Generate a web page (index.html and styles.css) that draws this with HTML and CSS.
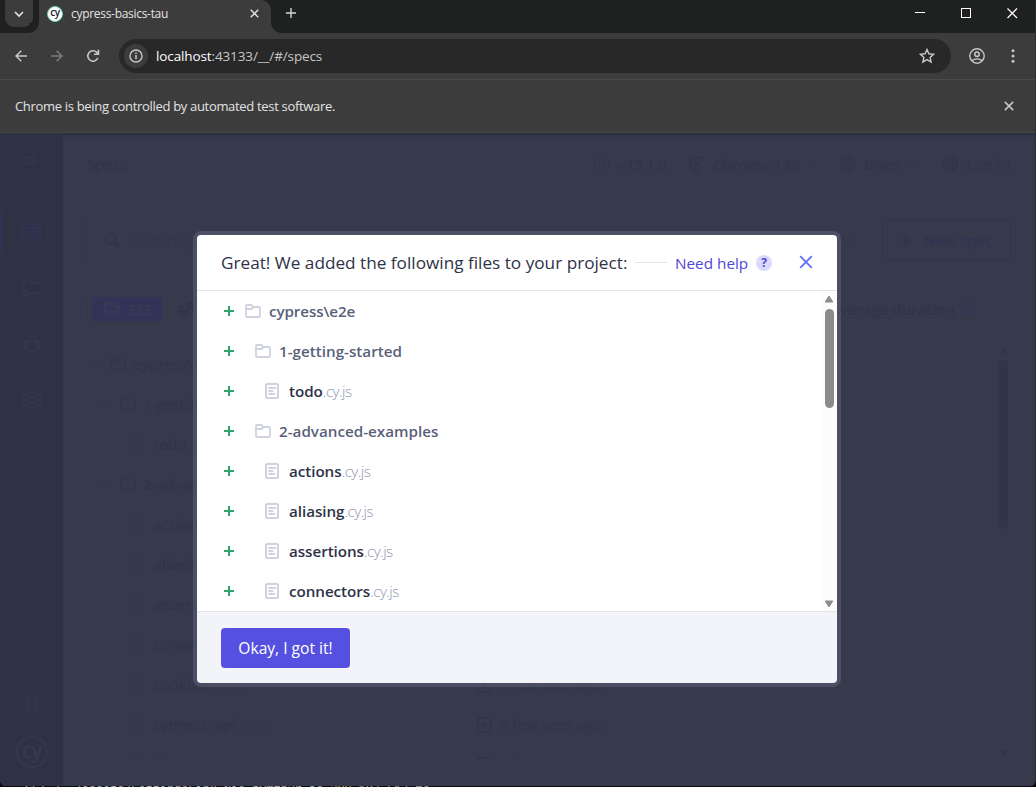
FILE: index.html
```html
<!DOCTYPE html>
<html lang="en">
<head>
<meta charset="utf-8">
<title>cypress-basics-tau</title>
<link rel="stylesheet" href="styles.css">
</head>
<body>
<svg class="defs" width="0" height="0">
  <symbol id="folder" viewBox="0 0 16 16"><path d="M1 3a1 1 0 0 1 1-1h4.2a1 1 0 0 1 .9.6L7.700 4H14a1 1 0 0 1 1 1v8a1 1 0 0 1-1 1H2a1 1 0 0 1-1-1z M1.500 6h5.200L8.500 4.200" fill="none" stroke="currentColor" stroke-width="1.800" stroke-linejoin="round"/></symbol>
  <symbol id="doc" viewBox="0 0 16 16"><rect x="2" y="1" width="12" height="14" rx=".8" class="doc-fill" stroke="currentColor" stroke-width="2"/><path d="M5 5h6.500M5 8h3.500M5 11h5.500" stroke="currentColor" stroke-width="1.800" stroke-linecap="round"/></symbol>
  <symbol id="plus" viewBox="0 0 12 12"><path d="M6 1v10M1 6h10" stroke="currentColor" stroke-width="2"/></symbol>
  <symbol id="chev" viewBox="0 0 10 10"><path d="M1 3l4 4 4-4" fill="none" stroke="currentColor" stroke-width="1.600"/></symbol>
  <symbol id="cross" viewBox="0 0 12 12"><path d="M1 1l10 10M11 1L1 11" stroke="currentColor" stroke-width="1.900"/></symbol>
  <symbol id="added" viewBox="0 0 16 16"><rect x="2" y="1" width="12.500" height="14" rx="1.500" fill="none" stroke="currentColor" stroke-width="2"/><path d="M8 5v6M5 8h6" stroke="currentColor" stroke-width="1.500"/></symbol>
</svg>
<div class="window">
  <div class="tabstrip">
    <span class="tabsearch"><svg width="10" height="10"><use href="#chev"/></svg></span>
    <div class="tab">
      <span class="favicon">cy</span>
      <span class="tab-title">cypress-basics-tau</span>
      <svg class="tab-x" width="9" height="9"><use href="#cross"/></svg>
    </div>
    <svg class="newtab" width="10" height="10" viewBox="0 0 10 10"><path d="M5 0v10M0 5h10" stroke="currentColor" stroke-width="1.400"/></svg>
    <div class="controls">
      <svg width="10" height="10"><path d="M0 4.500h10" stroke="#fff"/></svg>
      <svg width="10" height="10"><rect x=".5" y=".5" width="9" height="9" fill="none" stroke="#fff"/></svg>
      <svg width="11" height="11"><path d="M.5.5l9.500 9.500M10 .5L.5 10" stroke="#fff" stroke-width="1.200"/></svg>
    </div>
  </div>
  <div class="toolbar">
    <svg class="back" width="12" height="12" viewBox="0 0 12 12"><path d="M12 6H1M6.300.7L1 6l5.300 5.300" fill="none" stroke="currentColor" stroke-width="1.500"/></svg>
    <svg class="fwd" width="12" height="12" viewBox="0 0 12 12"><path d="M0 6h11M5.700.7L11 6l-5.300 5.300" fill="none" stroke="currentColor" stroke-width="1.500"/></svg>
    <svg class="reload" width="14" height="14" viewBox="0 0 14 14"><path d="M11.800 9A5.200 5.200 0 1 1 10.800 3.400L12.300 5M12.500.8V5.200H8" fill="none" stroke="currentColor" stroke-width="1.600"/></svg>
    <div class="omnibox">
      <span class="info"><svg width="14" height="14" viewBox="0 0 14 14"><circle cx="7" cy="7" r="6" fill="none" stroke="currentColor" stroke-width="1.400"/><path d="M7 6v4.300M7 3.500v1.500" stroke="currentColor" stroke-width="1.500"/></svg></span>
      <span class="url"><b>localhost</b>:43133/__/#/specs</span>
      <svg class="star" width="16" height="16" viewBox="0 0 16 16"><path d="M8 1.500l1.900 4.300 4.700.5-3.500 3.100 1 4.600L8 11.600 3.900 14l1-4.600L1.400 6.300l4.700-.5z" fill="none" stroke="currentColor" stroke-width="1.400"/></svg>
    </div>
    <svg class="profile" width="16" height="16" viewBox="0 0 16 16"><circle cx="8" cy="8" r="7.200" fill="none" stroke="currentColor" stroke-width="1.400"/><circle cx="8" cy="6.200" r="2.200" fill="none" stroke="currentColor" stroke-width="1.500"/><path d="M3 12.800c2.500-2.600 7.500-2.600 10 0" fill="none" stroke="currentColor" stroke-width="1.400"/></svg>
    <svg class="menu" width="4" height="14" viewBox="0 0 4 14"><circle cx="2" cy="1.700" r="1.500" fill="currentColor"/><circle cx="2" cy="7" r="1.500" fill="currentColor"/><circle cx="2" cy="12.300" r="1.500" fill="currentColor"/></svg>
  </div>
  <div class="infobar"><span>Chrome is being controlled by automated test software.</span><svg width="10" height="10"><use href="#cross"/></svg></div>

  <div class="app">
    <nav class="side">
      <svg class="s-proj" width="22" height="20" viewBox="0 0 22 20"><rect x="4" y="4" width="16" height="14" rx="2" fill="#2e3145"/><rect x="0" y="1" width="16" height="14" rx="2" fill="#2e3449"/><path d="M2 3.500h8" stroke="#2b2f42" stroke-width="1.500" stroke-dasharray="2 1"/></svg>
      <div class="s-active"><svg width="20" height="20" viewBox="0 0 20 20"><path d="M1 2.500h18v15.500H1zM1 6h18M8 9l-3 3 3 3M12 9l3 3-3 3" fill="none" stroke="currentColor" stroke-width="2"/></svg></div>
      <svg class="s-icon" width="20" height="20" viewBox="0 0 20 20"><path d="M0 2l5 5M5 2L0 7M8 5h12M8 15h12M1 13h4v4H1z" fill="none" stroke="currentColor" stroke-width="1.800"/></svg>
      <svg class="s-icon" width="20" height="20" viewBox="0 0 20 20"><path d="M5 8h10v5a5 5 0 0 1-10 0zM6.500 8V5.500a3.500 3.500 0 0 1 7 0V8M1 5c0 3 2 4 4 4M19 5c0 3-2 4-4 4M1 19c0-3 1-4 4-5M19 19c0-3-1-4-4-5M1 12h4M15 12h4" fill="none" stroke="currentColor" stroke-width="1.800"/></svg>
      <svg class="s-icon" width="20" height="20" viewBox="0 0 20 20"><path d="M8 1h4l.8 2.800L15 5l2.800-.7 1.500 3.400L17.500 10l1.800 2.300-1.500 3.400L15 15l-2.200 1.200L12 19H8l-.8-2.800L5 15l-2.800.7-1.500-3.400L2.500 10 .7 7.700l1.500-3.400L5 5l2.200-1.200z" fill="none" stroke="currentColor" stroke-width="1.600"/><circle cx="10" cy="10" r="3" fill="none" stroke="currentColor" stroke-width="1.800"/></svg>
      <svg class="s-cmd" width="16" height="16" viewBox="0 0 16 16"><path d="M5 5h6v6H5zM5 5H3a2 2 0 1 1 2-2zM11 5V3a2 2 0 1 1 2 2zM11 11h2a2 2 0 1 1-2 2zM5 11v2a2 2 0 1 1-2-2z" fill="none" stroke="currentColor" stroke-width="1.600"/></svg>
      <span class="s-logo">cy</span>
    </nav>
    <main class="main">
      <header class="head">
        <span class="h-title">Specs</span>
        <div class="h-links">
          <span class="h-item ver"><span class="mini-cy">cy</span>v15.1.0</span>
          <span class="h-item chr"><svg width="16" height="16" viewBox="0 0 16 16"><path d="M14 4A7 7 0 1 0 9 14.500" fill="none" stroke="currentColor" stroke-width="3"/><circle cx="8" cy="8" r="3" fill="currentColor"/></svg>Chrome 139<svg class="caret" width="8" height="8"><use href="#chev"/></svg></span>
          <span class="h-item docs"><svg width="16" height="16" viewBox="0 0 16 16"><path d="M8 1a7 7 0 1 0 0 14A7 7 0 1 0 8 1M3 4l5 2-1 4-4-2M9 13l1-4 4-1M8 1l4 5" fill="none" stroke="currentColor" stroke-width="1.800"/></svg>Docs<svg class="caret" width="8" height="8"><use href="#chev"/></svg></span>
          <span class="h-item login"><svg width="16" height="16" viewBox="0 0 16 16"><circle cx="8" cy="8" r="7" fill="none" stroke="currentColor" stroke-width="1.800"/><circle cx="8" cy="6" r="2.500" fill="none" stroke="currentColor" stroke-width="1.500"/><path d="M3 13c2-3 8-3 10 0" fill="none" stroke="currentColor" stroke-width="1.800"/></svg>Log in</span>
        </div>
      </header>
      <div class="searchrow">
        <div class="search"><svg width="15" height="15" viewBox="0 0 15 15"><circle cx="6" cy="6" r="5" fill="none" stroke="currentColor" stroke-width="1.800"/><path d="M9.500 9.500L14 14" stroke="currentColor" stroke-width="1.800"/></svg><span class="ph">Search specs</span><span class="match">20 matches</span></div>
        <div class="newspec"><svg width="13" height="13"><use href="#plus"/></svg>New spec</div>
      </div>
      <div class="cols">
        <div class="switch"><span class="e2e"><svg width="16" height="16" viewBox="0 0 16 16"><path d="M1 2h11v9H1zM12 5h3v9H4v-3M3 4.500h7" fill="none" stroke="currentColor" stroke-width="1.600"/></svg>E2E</span><svg class="comp" width="16" height="16" viewBox="0 0 16 16"><path d="M1 6h4v4H1zM1 10h4v4H1zM5 10h4v4H5zM9 2h5v5H9z" fill="none" stroke="currentColor" stroke-width="2"/></svg></div>
        <div class="avg"><span>Average duration</span><i>?</i></div>
      </div>
      <div class="listwrap">
        <div class="list">
          <div class="brow dir"><svg width="10" height="10"><use href="#chev"/></svg><svg width="16" height="16"><use href="#folder"/></svg><b>cypress\e2e</b></div>
          <div class="brow dir sub"><svg width="10" height="10"><use href="#chev"/></svg><svg width="16" height="16"><use href="#folder"/></svg><b>1-getting-started</b></div>
          <div class="brow file"><svg width="16" height="16"><use href="#doc"/></svg><b>todo</b><em>.cy.js</em></div>
          <div class="brow dir sub"><svg width="10" height="10"><use href="#chev"/></svg><svg width="16" height="16"><use href="#folder"/></svg><b>2-advanced-examples</b></div>
          <div class="brow file"><svg width="16" height="16"><use href="#doc"/></svg><b>actions</b><em>.cy.js</em></div>
          <div class="brow file"><svg width="16" height="16"><use href="#doc"/></svg><b>aliasing</b><em>.cy.js</em></div>
          <div class="brow file"><svg width="16" height="16"><use href="#doc"/></svg><b>assertions</b><em>.cy.js</em></div>
          <div class="brow file"><svg width="16" height="16"><use href="#doc"/></svg><b>connectors</b></div>
          <div class="brow file"><svg width="16" height="16"><use href="#doc"/></svg><b>cookies</b><em>.cy.js</em><span class="ago"><svg width="16" height="16"><use href="#added"/></svg>a few secs ago</span></div>
          <div class="brow file"><svg width="16" height="16"><use href="#doc"/></svg><b>cypress_api</b><em>.cy.js</em><span class="ago"><svg width="16" height="16"><use href="#added"/></svg>a few secs ago</span></div>
          <div class="brow file"><svg width="16" height="16"><use href="#doc"/></svg><b>files</b><em>.cy.js</em><span class="ago"><svg width="16" height="16"><use href="#added"/></svg>a few secs ago</span></div>
        </div>
        <div class="bscroll"><svg width="10" height="8"><path d="M1 8L5 1l4 7z" fill="currentColor"/></svg><div class="bthumb"></div><svg class="bdown" width="10" height="8"><path d="M1 0l4 7 4-7z" fill="currentColor"/></svg></div>
      </div>
    </main>

    <section class="modal">
      <div class="m-head">
        <h2>Great! We added the following files to your project:</h2>
        <span class="dash"></span>
        <span class="help">Need help</span><span class="q">?</span>
        <svg class="m-x" width="14" height="14" viewBox="0 0 14 14"><path d="M1.200 1.200l11.600 11.600M12.800 1.200L1.200 12.800" stroke="currentColor" stroke-width="1.900"/></svg>
      </div>
      <div class="m-body">
        <div class="files">
          <div class="row l0"><svg class="pl" width="12" height="12"><use href="#plus"/></svg><svg class="ic" width="18" height="16"><use href="#folder"/></svg><b>cypress\e2e</b></div>
          <div class="row l1"><svg class="pl" width="12" height="12"><use href="#plus"/></svg><svg class="ic" width="18" height="16"><use href="#folder"/></svg><b>1-getting-started</b></div>
          <div class="row l2"><svg class="pl" width="12" height="12"><use href="#plus"/></svg><svg class="ic" width="16" height="16"><use href="#doc"/></svg><b>todo</b><em>.cy.js</em></div>
          <div class="row l1"><svg class="pl" width="12" height="12"><use href="#plus"/></svg><svg class="ic" width="18" height="16"><use href="#folder"/></svg><b>2-advanced-examples</b></div>
          <div class="row l2"><svg class="pl" width="12" height="12"><use href="#plus"/></svg><svg class="ic" width="16" height="16"><use href="#doc"/></svg><b>actions</b><em>.cy.js</em></div>
          <div class="row l2"><svg class="pl" width="12" height="12"><use href="#plus"/></svg><svg class="ic" width="16" height="16"><use href="#doc"/></svg><b>aliasing</b><em>.cy.js</em></div>
          <div class="row l2"><svg class="pl" width="12" height="12"><use href="#plus"/></svg><svg class="ic" width="16" height="16"><use href="#doc"/></svg><b>assertions</b><em>.cy.js</em></div>
          <div class="row l2"><svg class="pl" width="12" height="12"><use href="#plus"/></svg><svg class="ic" width="16" height="16"><use href="#doc"/></svg><b>connectors</b><em>.cy.js</em></div>
        </div>
        <div class="scroll"><svg width="10" height="8"><path d="M1.200 7L5 1l3.800 6z" fill="#8b8b8b" stroke="#8b8b8b" stroke-linejoin="round"/></svg><div class="thumb"></div><svg class="down" width="10" height="8"><path d="M1.200 1L5 7l3.800-6z" fill="#8b8b8b" stroke="#8b8b8b" stroke-linejoin="round"/></svg></div>
      </div>
      <div class="m-foot"><button class="ok">Okay, I got it!</button></div>
    </section>
  </div>
</div>
<div class="terminal"><span>GET /__/assets/SettingsLink-Nio_bvmfp3r.js <i>200</i> 187.517 ms</span></div>
</body>
</html>
```
FILE: styles.css
```css
* { box-sizing: border-box; }
body { margin: 0; width: 1036px; height: 787px; overflow: hidden; background: #0c0c0c; font-family: "Open Sans", "Noto Sans", sans-serif; }
svg { flex: none; display: block; }
.defs { position: absolute; }
b { font-weight: 600; }
em, i { font-style: normal; }

.window { height: 786px; border-right: 1px solid #2d2f2f; border-radius: 0 0 6px 6px; overflow: hidden; background: #3c3c3c; }

/* Browser chrome */
.tabstrip { display: flex; height: 33px; background: #1f2120; }
.tabsearch { width: 28px; height: 27px; margin-left: 5px; background: #3c3c3c; border-radius: 0 0 9px 9px; display: flex; align-items: center; justify-content: center; color: #e3e3e3; }
.tab { width: 232px; height: 33px; margin-left: 6px; padding: 0 12px 6px 8px; background: #3c3c3c; border-radius: 0 10px 0 0; display: flex; align-items: center; color: #e3e3e3; position: relative; }
.tab::before, .tab::after { content: ""; position: absolute; bottom: 0; width: 10px; height: 10px; }
.tab::before { left: -10px; background: radial-gradient(circle at 0 0, #1f2120 9.500px, #3c3c3c 10px); }
.tab::after { right: -10px; background: radial-gradient(circle at 100% 0, #1f2120 9.500px, #3c3c3c 10px); }
.favicon { width: 16px; height: 16px; border-radius: 50%; background: #fff; border: 1px solid #69d3a7; color: #1b1e2e; font-size: 10px; line-height: 11px; text-align: center; font-weight: 600; letter-spacing: -.5px; }
.tab-title { font-size: 12px; line-height: 16px; margin-left: 8px; letter-spacing: -.3px; white-space: nowrap; }
.tab-x { margin-left: auto; }
.newtab { margin: 8px 0 0 15px; color: #d5d5d5; }
.controls { margin-left: auto; display: flex; gap: 36px; padding: 8px 17px 0 0; }
.toolbar { height: 46px; display: flex; align-items: center; color: #c7c7c7; }
.back { margin-left: 15px; }
.fwd { margin-left: 24px; color: #7b7b7b; }
.reload { margin-left: 23px; }
.omnibox { width: 832px; height: 34px; margin-left: 19px; border-radius: 17px; background: #282828; display: flex; align-items: center; padding: 0 16px 0 5px; }
.info { width: 24px; height: 24px; border-radius: 50%; background: #3c3c3c; display: flex; align-items: center; justify-content: center; }
.url { margin-left: 8px; font-size: 13.500px; color: #c7c7c7; letter-spacing: -.12px; }
.url b { color: #fff; font-weight: 400; }
.star { margin-left: auto; }
.profile { margin-left: 18px; }
.menu { margin-left: 26px; }
.infobar { height: 54px; border-top: 1px solid #494949; border-bottom: 1px solid #464646; display: flex; align-items: center; justify-content: space-between; padding: 0 21px 0 15px; font-size: 13px; letter-spacing: -.32px; color: #e3e3e3; }
.infobar svg { color: #c7c7c7; }

/* Dimmed app */
.app { height: 653px; display: flex; position: relative; background: #37394c; font-size: 15px; box-shadow: inset 0 3px 4px -2px #25283a; }
.side { width: 63px; background: #2f3245; display: flex; flex-direction: column; align-items: center; color: #343749; padding: 18px 0 18px; border-radius: 0 0 0 6px; }
.s-proj { margin-left: 1px; }
.s-active { width: 63px; height: 40px; margin-top: 41px; border-left: 3px solid #32345a; display: flex; align-items: center; padding-left: 18px; color: #32355a; opacity: .6; }
.s-icon { margin-top: 36px; }
.s-active + .s-icon { margin-top: 26px; }
.s-cmd { margin: auto 2px 0 0; }
.s-logo { width: 32px; height: 32px; margin-top: 24px; border: 2px solid #353849; border-radius: 50%; color: #37394b; font-size: 21px; line-height: 24px; font-weight: 600; text-align: center; letter-spacing: -1px; }
.main { flex: 1; padding: 0 24px; color: #323549; }
.head { height: 61px; display: flex; align-items: center; justify-content: space-between; }
.h-title { font-size: 15.200px; }
.h-links { display: flex; }
.h-item { display: flex; align-items: center; gap: 8px; font-weight: 600; white-space: nowrap; color: #33364a; }
.ver { width: 95px; letter-spacing: -.35px; }
.chr { width: 151px; letter-spacing: -.1px; }
.docs { width: 102px; }
.login { width: 69px; letter-spacing: .2px; }
.caret { color: #35384b; }
.mini-cy { width: 16px; height: 16px; border: 1.500px solid; border-radius: 50%; font-size: 9px; line-height: 11px; text-align: center; }
.searchrow { display: flex; justify-content: space-between; margin-top: 26px; height: 40px; }
.search { width: 779px; display: flex; align-items: center; padding-left: 17px; border-left: 1px solid #35374a; }
.ph { margin-left: 9px; color: #34364a; }
.match { margin-left: auto; padding-right: 16px; color: #34364a; }
.newspec { width: 129px; border: 1px solid #323448; border-radius: 4px; display: flex; align-items: center; justify-content: center; gap: 10px; font-weight: 600; color: #323451; }
.newspec svg { color: #323548; }
.cols { display: flex; height: 28px; margin-top: 35px; justify-content: space-between; align-items: center; }
.switch { display: flex; align-items: center; border-left: 1px solid #34364a; padding-left: 4px; }
.e2e { width: 70px; height: 24px; border-radius: 4px; background: #32345a; opacity: .8; color: #3b3c57; display: flex; align-items: center; gap: 8px; padding-left: 12px; font-size: 14px; }
.comp { margin-left: 17px; color: #323548; }
.avg { display: flex; gap: 5px; align-items: center; font-weight: 600; padding-right: 35px; }
.avg span { border-bottom: 1px dotted; line-height: 18px; }
.avg i { width: 16px; height: 16px; border-radius: 50%; background: #34365a66; text-align: center; font-size: 11px; line-height: 16px; }
.listwrap { display: flex; height: 416px; margin-top: 21px; overflow: hidden; }
.list { flex: 1; }
.brow { height: 40px; display: flex; align-items: center; position: relative; color: #32354e; }
.dir { padding-left: 3px; color: #33364a; }
.dir svg { color: #34374a; }
.dir svg + svg { margin-left: 10px; }
.dir b { margin-left: 7px; }
.sub { padding-left: 13px; }
.file svg { color: #35384b; }
.file { padding-left: 42px; }
.file > b { margin-left: 8px; }
.file em { color: #35374a; margin-left: 3px; letter-spacing: -.4px; }
.doc-fill { fill: none; }
.ago { position: absolute; left: 389px; display: flex; gap: 8px; color: #333648; letter-spacing: .1px; }
.ago svg { margin-top: 3px; }
.file .ago svg { color: #333648; }
.bscroll { width: 15px; display: flex; flex-direction: column; align-items: center; padding: 3px 0 2px; color: #323548; }
.bthumb { width: 9px; height: 169px; margin-top: 5px; border-radius: 5px; background: #323548; }
.bdown { margin-top: auto; }

/* Modal */
.modal { position: absolute; left: 193px; top: 98px; width: 648px; height: 456px; border: 4px solid rgba(144, 149, 173, .25); border-radius: 8px; display: flex; flex-direction: column; }
.m-head { height: 56px; background: #fff; border-bottom: 1px solid #e1e3ed; border-radius: 4px 4px 0 0; display: flex; align-items: center; padding-left: 24px; }
.m-head h2 { margin: 0; width: 414px; font-size: 17.200px; font-weight: 400; color: #2e3247; white-space: nowrap; }
.dash { width: 32px; height: 1px; background: #e1e3ed; }
.help { margin-left: 8px; width: 81px; font-size: 15.300px; color: #4f46d8; white-space: nowrap; }
.q { width: 16px; height: 16px; border-radius: 50%; background: #dadafc; color: #4f46d8; font-size: 12px; font-weight: 700; line-height: 16px; text-align: center; }
.m-x { margin: 0 0 2px 27px; color: #6470f3; }
.m-body { height: 320px; background: #fff; display: flex; }
.files { flex: 1; overflow: hidden; }
.row { height: 40px; display: flex; align-items: center; font-size: 15.200px; white-space: nowrap; padding-left: 26px; color: #2e3247; }
.pl { color: #33a36c; }
.ic { margin-left: 9px; color: #d0d2e0; }
.row b { margin-left: 7px; }
.row em { color: #9095ad; font-weight: 300; letter-spacing: -.55px; }
.l0 b, .l1 b { color: #5a5f7a; }
.l0 b { letter-spacing: -.1px; }
.l1 .ic { margin-left: 19px; }
.l2 .ic { margin-left: 29px; }
.l2 b { margin-left: 8px; padding-left: 1px; letter-spacing: -.05px; }
.ic .doc-fill, .ic { fill: #f3f4fa; }
.scroll { width: 15px; background: #fcfcfc; display: flex; flex-direction: column; align-items: center; padding: 4px 1px 3px 0; }
.thumb { width: 9px; height: 99px; margin-top: 6px; border-radius: 5px; background: #8b8b8b; }
.down { margin-top: auto; }
.m-foot { height: 72px; background: #f3f4fa; border-top: 1px solid #e1e3ed; border-radius: 0 0 4px 4px; padding: 16px 24px; }
.ok { width: 129px; height: 40px; border: 0; border-radius: 4px; background: #5550e0; color: #fff; font: 400 15.600px "Open Sans", sans-serif; padding: 0; }

.terminal { height: 2px; overflow: hidden; padding-left: 25px; margin-top: -1px; }
.terminal span { display: block; font: 12px/13px "Liberation Mono", monospace; letter-spacing: -.1px; color: #aaa; white-space: pre; margin-top: -1px; }
.terminal i { color: #c9b45a; }
```
